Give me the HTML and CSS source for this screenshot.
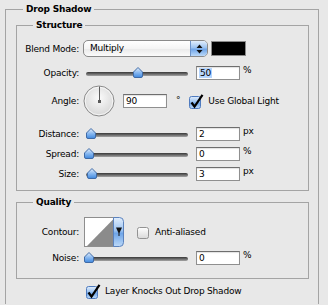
FILE: index.html
```html
<!DOCTYPE html>
<html lang="en">
<head>
    <meta charset="UTF-8">
    <title>Drop Shadow</title>
    <link rel="stylesheet" href="styles.css">
</head>
<body>
    <fieldset class="group outer">
        <legend>Drop Shadow</legend>

        <fieldset class="group inner">
            <legend>Structure</legend>

            <div class="row row-blend">
                <span class="lbl">Blend Mode:</span>
                <div class="popup">
                    <span class="popup-text">Multiply</span>
                    <span class="popup-btn">
                        <svg width="7" height="10" viewBox="0 0 7 10"><path d="M3.5 0.5 L6.5 4 H0.5Z M0.5 6 H6.5 L3.5 9.5Z" fill="#111"/></svg>
                    </span>
                </div>
                <span class="swatch"></span>
            </div>

            <div class="row row-slider row-opacity">
                <span class="lbl">Opacity:</span>
                <div class="slider"><span class="track"></span><svg class="thumb" style="left:48px" width="10" height="11"><use href="#thumb"/></svg></div>
                <span class="field"><span class="sel">50</span></span>
                <span class="unit">%</span>
            </div>

            <div class="row row-angle">
                <span class="lbl">Angle:</span>
                <svg class="dial" width="32" height="32" viewBox="0 0 32 32">
                    <circle cx="16" cy="16" r="15" fill="url(#dialFill)" stroke="#8a8a8a"/>
                    <circle cx="16" cy="16" r="13.8" fill="none" stroke="#fff" stroke-opacity="0.7"/>
                    <line x1="16.5" y1="1.5" x2="16.5" y2="16" stroke="#5a5a5a"/>
                    <rect x="15" y="15" width="3" height="3" fill="#5a5a5a"/>
                </svg>
                <span class="field">90</span>
                <span class="degree">°</span>
                <svg class="check" width="15" height="15"><use href="#checked"/></svg>
                <span class="check-text">Use Global Light</span>
            </div>

            <div class="row row-slider row-distance">
                <span class="lbl">Distance:</span>
                <div class="slider"><span class="track"></span><svg class="thumb" style="left:1px" width="10" height="11"><use href="#thumb"/></svg></div>
                <span class="field">2</span>
                <span class="unit">px</span>
            </div>

            <div class="row row-slider">
                <span class="lbl">Spread:</span>
                <div class="slider"><span class="track"></span><svg class="thumb" style="left:-1px" width="10" height="11"><use href="#thumb"/></svg></div>
                <span class="field">0</span>
                <span class="unit">%</span>
            </div>

            <div class="row row-slider">
                <span class="lbl">Size:</span>
                <div class="slider"><span class="track"></span><svg class="thumb" style="left:2px" width="10" height="11"><use href="#thumb"/></svg></div>
                <span class="field">3</span>
                <span class="unit">px</span>
            </div>
        </fieldset>

        <fieldset class="group inner quality">
            <legend>Quality</legend>

            <div class="row row-contour">
                <span class="lbl">Contour:</span>
                <svg class="contour" width="40" height="30" viewBox="0 0 40 30">
                    <rect x="0.5" y="0.5" width="30" height="29" fill="#fff" stroke="#8e8e8e"/>
                    <polygon points="3,29 29.5,2 29.5,29" fill="#8b8b8b"/>
                    <path d="M29.5 0.5 H35.5 Q39.5 0.5 39.5 4.5 V25.5 Q39.5 29.5 35.5 29.5 H29.5Z" fill="url(#aqua)" stroke="#5b82bd"/>
                    <path d="M32 10.5 H38 L35.5 16 V19 H34.5 V16Z" fill="#111"/>
                </svg>
                <svg class="box" width="13" height="13"><use href="#unchecked"/></svg>
                <span class="check-text">Anti-aliased</span>
            </div>

            <div class="row row-slider row-noise">
                <span class="lbl">Noise:</span>
                <div class="slider"><span class="track"></span><svg class="thumb" style="left:-1px" width="10" height="11"><use href="#thumb"/></svg></div>
                <span class="field">0</span>
                <span class="unit">%</span>
            </div>
        </fieldset>

        <div class="row row-knocks">
            <svg class="check" width="15" height="15"><use href="#checked"/></svg>
            <span class="check-text">Layer Knocks Out Drop Shadow</span>
        </div>
    </fieldset>

    <svg class="defs" width="0" height="0">
        <defs>
            <linearGradient id="aqua" x1="0" y1="0" x2="0" y2="1">
                <stop offset="0" stop-color="#e2eefc"/>
                <stop offset="0.45" stop-color="#9cc3f1"/>
                <stop offset="0.55" stop-color="#6fa5e8"/>
                <stop offset="1" stop-color="#bcd9f8"/>
            </linearGradient>
            <linearGradient id="thumbFill" x1="0" y1="0" x2="0" y2="1">
                <stop offset="0" stop-color="#e6f0fc"/>
                <stop offset="0.5" stop-color="#8ab9f0"/>
                <stop offset="1" stop-color="#3f88df"/>
            </linearGradient>
            <linearGradient id="boxFill" x1="0" y1="0" x2="0" y2="1">
                <stop offset="0" stop-color="#ffffff"/>
                <stop offset="1" stop-color="#d9d9d9"/>
            </linearGradient>
            <radialGradient id="dialFill" cx="50%" cy="40%" r="60%">
                <stop offset="0" stop-color="#fbfbfb"/>
                <stop offset="1" stop-color="#d6d6d6"/>
            </radialGradient>
            <symbol id="thumb" viewBox="0 0 10 11">
                <path d="M5 0.5 L9.5 5 V9 Q9.5 10.5 8 10.5 H2 Q0.5 10.5 0.5 9 V5Z" fill="url(#thumbFill)" stroke="#3f6aa6"/>
            </symbol>
            <symbol id="checked" viewBox="0 0 15 15">
                <rect x="0.5" y="2.5" width="11" height="12" rx="2" fill="url(#aqua)" stroke="#4f7bbf"/>
                <path d="M2.5 8.5 L5.5 12.5 L13.5 0.8" fill="none" stroke="#000" stroke-width="2.2"/>
            </symbol>
            <symbol id="unchecked" viewBox="0 0 13 13">
                <rect x="0.5" y="0.5" width="11" height="11" rx="2" fill="url(#boxFill)" stroke="#939393"/>
            </symbol>
        </defs>
    </svg>
</body>
</html>
```

FILE: styles.css
```css
:root {
    --bg: #e8e8e8;
    --group-border: #a4a4a4;
    --field-border: #8f8f8f;
    --text: #000;
    --selection: #b5d5fe;
}

html {
    overflow: hidden;
}

body {
    margin: 0;
    padding: 3px 0 0 5px;
    background-color: var(--bg);
    color: var(--text);
    font-family: "DejaVu Sans", "Liberation Sans", sans-serif;
    font-size: 9px;
    letter-spacing: -0.2px;
}

.group {
    margin: 0;
    min-width: 0;
    border: 1px solid var(--group-border);
    box-sizing: border-box;
}

.group > legend {
    padding: 0 3px;
    line-height: 13px;
    font-weight: bold;
}

.outer {
    width: 314px;
    padding: 3px 9px 6px 10px;
    border-bottom: none;
}

.outer > legend {
    margin-left: 7px;
}

.inner {
    width: 293px;
    padding: 8px 0 9px 0;
}

.inner > legend {
    margin-left: 16px;
}

.quality {
    margin-top: 5px;
    padding-bottom: 13px;
}

.row {
    display: flex;
    align-items: center;
    line-height: 12px;
}

.lbl {
    flex: none;
    width: 62px;
    text-align: right;
}

/* blend mode popup */
.row-blend {
    height: 17px;
}

.popup {
    display: flex;
    margin-left: 4px;
    width: 125px;
    height: 17px;
    box-sizing: border-box;
    border: 1px solid #8a8a8a;
    border-radius: 5px;
    overflow: hidden;
    background: linear-gradient(#ffffff, #f4f4f4 50%, #e9e9e9 51%, #fbfbfb);
}

.popup-text {
    flex: 1;
    padding-left: 6px;
    line-height: 15px;
}

.popup-btn {
    display: flex;
    align-items: center;
    justify-content: center;
    width: 16px;
    border-left: 1px solid #6d93c9;
    background: linear-gradient(#e2eefc, #9cc3f1 45%, #6fa5e8 55%, #bcd9f8);
}

.swatch {
    margin-left: 3px;
    width: 35px;
    height: 15px;
    box-sizing: border-box;
    background-color: #000;
    border: 1px solid #8a8a8a;
}

/* sliders */
.row-slider {
    height: 14px;
}

.row-opacity {
    margin-top: 9px;
}

.row-distance {
    margin-top: 10px;
}

.row-slider + .row-slider {
    margin-top: 6px;
}

.slider {
    position: relative;
    flex: none;
    margin-left: 6px;
    width: 104px;
    height: 14px;
}

.track {
    display: block;
    margin: 6px 1px 0;
    height: 4px;
    border-radius: 2px;
    background: linear-gradient(#383838, #6a6a6a 50%, #a5a5a5);
}

.thumb {
    position: absolute;
    top: 1px;
}

.field {
    flex: none;
    margin-left: 7px;
    width: 44px;
    height: 14px;
    box-sizing: border-box;
    padding-left: 2px;
    border: 1px solid var(--field-border);
    border-top-color: #6e6e6e;
    background-color: #fff;
    box-shadow: inset 0 1px 1px rgba(0, 0, 0, 0.12);
    line-height: 12px;
}

.sel {
    background-color: var(--selection);
    padding: 0 1px;
}

.unit {
    align-self: flex-start;
    margin-left: 3px;
    margin-top: -2px;
}

/* angle */
.row-angle {
    margin-top: 5px;
    height: 32px;
}

.dial {
    flex: none;
    margin-left: 4px;
}

.row-angle .field {
    margin-left: 8px;
}

.degree {
    align-self: flex-start;
    margin: 9px 0 0 9px;
}

.check {
    flex: none;
    margin-left: 9px;
}

.check-text {
    margin-left: 4px;
}

/* quality */
.row-contour {
    height: 30px;
}

.contour {
    flex: none;
    margin-left: 5px;
}

.box {
    flex: none;
    margin: 2px 0 0 13px;
}

.row-contour .check-text {
    margin-left: 5px;
}

.row-noise {
    margin-top: 4px;
}

.row-knocks {
    margin-top: 5px;
    height: 14px;
}

.row-knocks .check {
    margin-left: 70px;
}

.defs {
    display: block;
    height: 0;
}
```
